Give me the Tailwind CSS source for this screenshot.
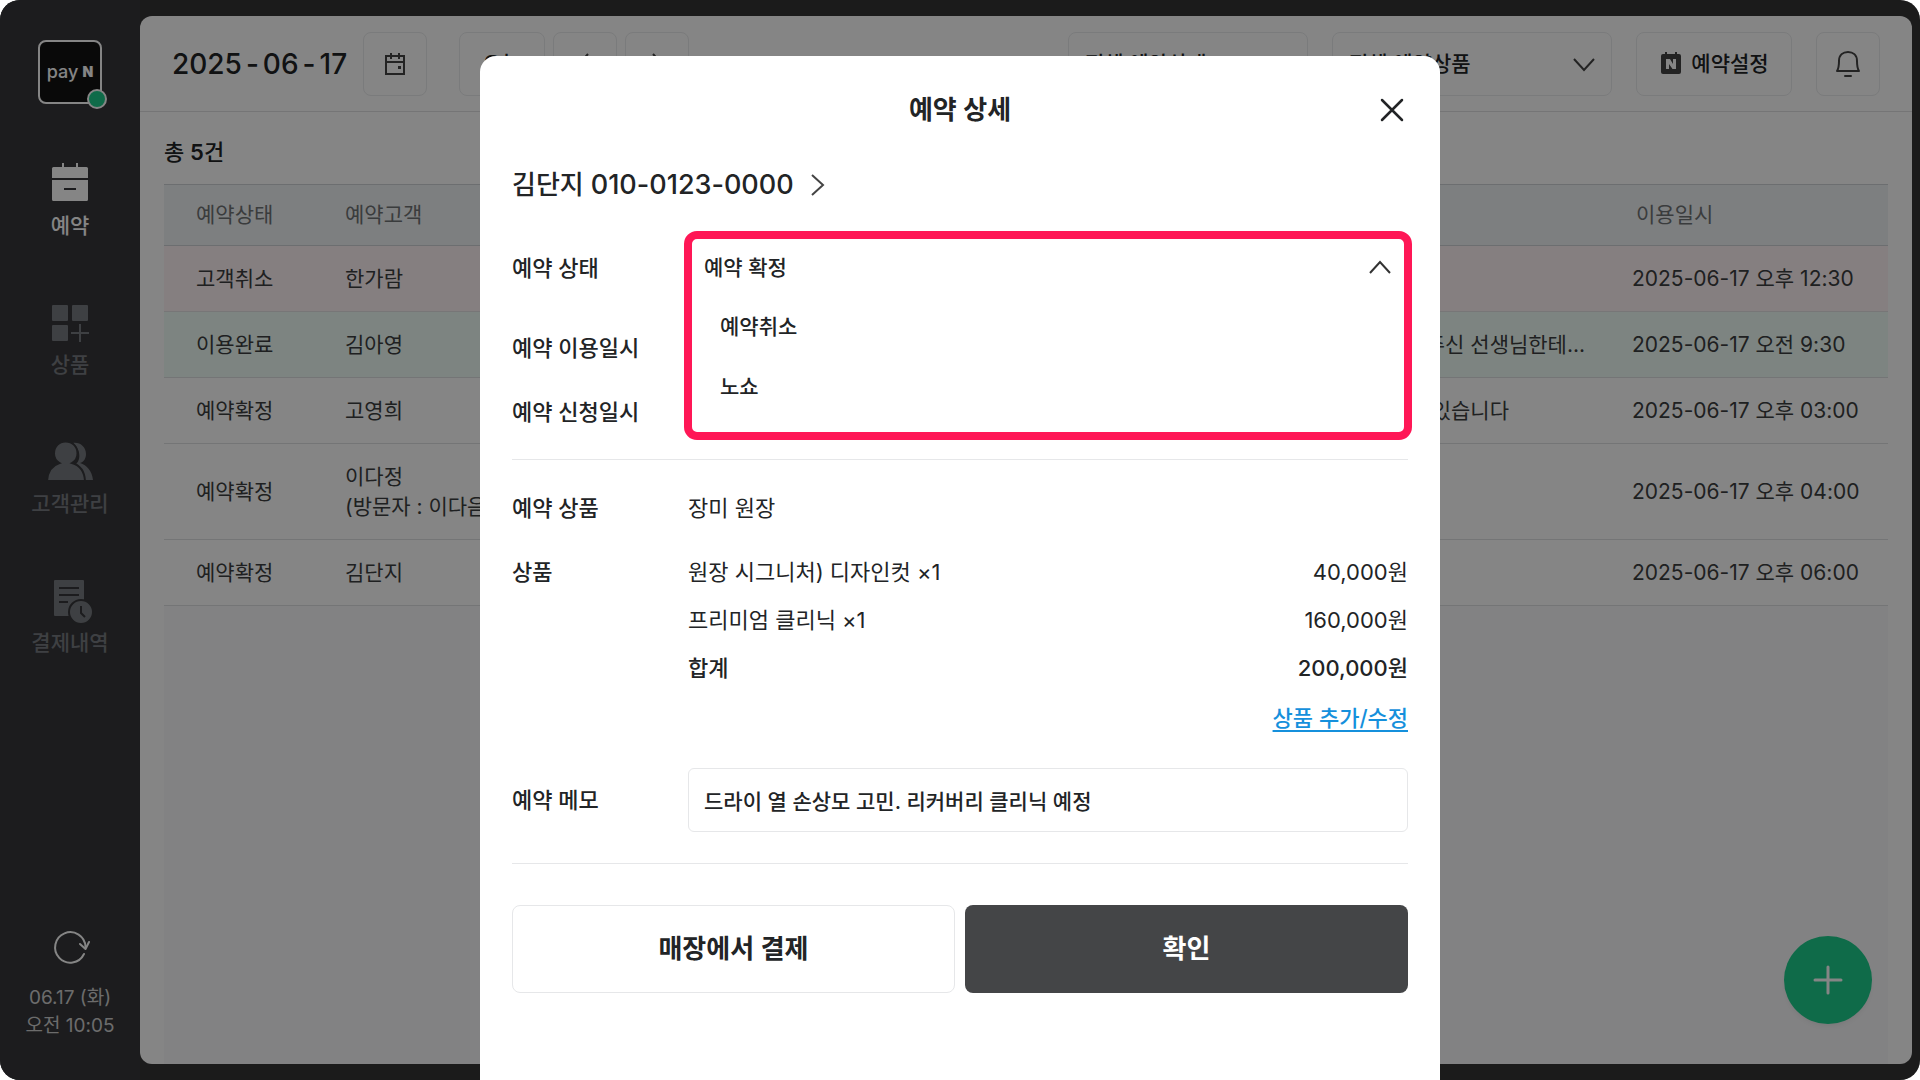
<!DOCTYPE html>
<html lang="ko">
<head>
    <meta charset="UTF-8">
    <meta name="viewport" content="width=device-width, initial-scale=1.0">
    <title>예약 상세</title>
    <script src="https://cdn.jsdelivr.net/npm/@tailwindcss/browser@4"></script>
</head>
<body class="bg-white font-['Inter','Noto_Sans_CJK_KR',sans-serif] text-[#222426]">
    <div class="relative flex h-screen overflow-hidden rounded-[20px] bg-[#343434]">
        <!-- Sidebar -->
        <aside class="flex w-[140px] shrink-0 flex-col items-center bg-[#36373a] pt-10 pb-10 text-[21px] leading-8 text-[#787b80]">
            <div class="relative flex size-16 items-center justify-center gap-1 rounded-lg border-2 border-white bg-[#131313] text-white">
                <span class="text-[18px] leading-5 font-medium">pay</span>
                <span class="text-[14px] leading-5 font-black">N</span>
                <span class="absolute -right-[7px] -bottom-[7px] size-5 rounded-full border-2 border-white bg-[#1dce8c]"></span>
            </div>
            <nav class="mt-14 flex flex-col items-center gap-[57px]">
                <a href="#" class="flex flex-col items-center gap-[2px] text-white">
                    <svg class="h-12 w-12" viewBox="0 0 48 48" fill="currentColor">
                        <path d="M16 3h2v5h-2zM30 3h2v5h-2z"/>
                        <path d="M7.500 7h33a1.500 1.500 0 0 1 1.500 1.500V18H6V8.500A1.500 1.500 0 0 1 7.500 7z"/>
                        <path fill-rule="evenodd" d="M6 20h36v19.500a1.500 1.500 0 0 1-1.500 1.500h-33A1.500 1.500 0 0 1 6 39.500zM18 28v2h12v-2z"/>
                    </svg>
                    <span class="font-medium">예약</span>
                </a>
                <a href="#" class="flex flex-col items-center gap-[2px]">
                    <svg class="h-12 w-12" viewBox="0 0 48 48" fill="currentColor">
                        <rect x="6" y="6" width="16" height="16" rx="1"/>
                        <rect x="26" y="6" width="16" height="16" rx="1"/>
                        <rect x="6" y="26" width="16" height="16" rx="1"/>
                        <path d="M33 25h2v8h8v2h-8v8h-2v-8h-8v-2h8z"/>
                    </svg>
                    <span class="font-medium">상품</span>
                </a>
                <a href="#" class="flex flex-col items-center gap-[2px]">
                    <svg class="h-12 w-12" viewBox="0 0 48 48" fill="currentColor">
                        <path d="M27 5c7-1 13 4 13 11 0 4-2 8-6 9 7 2 12 8 13 17h-8c-1-7-4-13-9-16 4-3 6-13-3-21z"/>
                        <path stroke="#36373a" stroke-width="2" d="M19.500 3.500c7 0 12 5 12 12 0 4-2 7.500-5.500 9.500 7 2 12.500 8 13 18H1c.5-10 6-16 12.500-18C10 23 8 19.500 8 15.500c0-7 5-12 11.500-12z"/>
                    </svg>
                    <span class="font-medium">고객관리</span>
                </a>
                <a href="#" class="flex flex-col items-center gap-[2px]">
                    <svg class="h-12 w-12" viewBox="0 0 48 48" fill="currentColor">
                        <path d="M9 3h28a1 1 0 0 1 1 1v35H9a1 1 0 0 1-1-1V4a1 1 0 0 1 1-1z"/>
                        <path stroke="#36373a" stroke-width="2" d="M13 11h20M13 18h20M13 25h9"/>
                        <circle cx="35" cy="35" r="12" stroke="#36373a" stroke-width="2"/>
                        <path fill="none" stroke="#36373a" stroke-width="2" d="M35 29v7l4 4"/>
                    </svg>
                    <span class="font-medium">결제내역</span>
                </a>
            </nav>
            <button type="button" aria-label="새로고침" class="mt-auto">
                <svg class="size-10" viewBox="0 0 40 40" fill="none" stroke="#fff" stroke-width="2" stroke-linecap="round" stroke-linejoin="round">
                    <path d="M34 26A15.200 15.200 0 1 1 35.500 19"/>
                    <path d="M30 16l5.500 5L39 14"/>
                </svg>
            </button>
            <p class="mt-4 text-center text-[19px] leading-7 text-[#cfcfcf]">06.17 (화)<br>오전 10:05</p>
        </aside>

        <!-- Reservation list -->
        <main class="relative my-4 mr-2 flex flex-1 flex-col overflow-hidden rounded-xl bg-white">
            <header class="flex h-24 shrink-0 items-center border-b border-[#e0e1e3] px-8 text-[21px] leading-8 font-medium">
                <h1 class="flex gap-1 text-[28px] leading-10 font-medium"><span>2025</span><span>-</span><span>06</span><span>-</span><span>17</span></h1>
                <button type="button" aria-label="날짜 선택" class="ml-4 flex size-16 items-center justify-center rounded-lg border border-[#eaebed] text-[#444]">
                    <svg class="size-6" viewBox="0 0 24 24" fill="none" stroke="currentColor" stroke-width="2">
                        <path d="M3 4h18v18H3zM3 10h18M8 1v6M16 1v6"/>
                        <path fill="currentColor" stroke="none" d="M15 14h3v3h-3z"/>
                    </svg>
                </button>
                <button type="button" class="ml-8 h-16 w-[86px] rounded-lg border border-[#eaebed]">오늘</button>
                <button type="button" aria-label="이전" class="ml-2 flex size-16 items-center justify-center rounded-lg border border-[#eaebed] text-[#444]">
                    <svg class="size-6" viewBox="0 0 24 24" fill="none" stroke="currentColor" stroke-width="2"><path d="M15 2l-9 10 9 10"/></svg>
                </button>
                <button type="button" aria-label="다음" class="ml-2 flex size-16 items-center justify-center rounded-lg border border-[#eaebed] text-[#444]">
                    <svg class="size-6" viewBox="0 0 24 24" fill="none" stroke="currentColor" stroke-width="2"><path d="M8 2l9 10-9 10"/></svg>
                </button>
                <select aria-label="예약상태" class="ml-auto h-16 w-60 appearance-none rounded-lg border border-[#eaebed] px-4">
                    <option>전체 예약상태</option>
                </select>
                <div class="relative ml-6">
                    <select aria-label="예약상품" class="h-16 w-[280px] appearance-none rounded-lg border border-[#eaebed] px-4">
                        <option>전체 예약상품</option>
                    </select>
                    <svg class="pointer-events-none absolute top-5 right-4 size-6" viewBox="0 0 24 24" fill="none" stroke="#444" stroke-width="2"><path d="M2 7l10 11L22 7"/></svg>
                </div>
                <button type="button" class="ml-6 flex h-16 w-[156px] items-center justify-center gap-2 rounded-lg border border-[#eaebed]">
                    <svg class="size-6" viewBox="0 0 24 24" fill="#444">
                        <path d="M6 0h2v3H6zM16 0h2v3h-2z"/>
                        <rect x="2" y="2" width="20" height="20" rx="2"/>
                        <path fill="#fff" d="M7 7h4l3 5V7h3v10h-3.500L10 12v5H7z"/>
                    </svg>
                    예약설정
                </button>
                <button type="button" aria-label="알림" class="ml-6 flex size-16 items-center justify-center rounded-lg border border-[#eaebed] text-[#444]">
                    <svg class="size-8" viewBox="0 0 32 32" fill="none" stroke="currentColor" stroke-width="2" stroke-linejoin="round">
                        <path d="M5 23c2-3 2-6 2-10 0-6 4-9 9-9s9 3 9 9c0 4 0 7 2 10z"/>
                        <path stroke-linecap="round" d="M13 28h6"/>
                    </svg>
                </button>
            </header>

            <section class="flex flex-1 flex-col px-6 text-[21px] leading-8">
                <p class="pt-6 pb-4 text-[22px] font-medium">총 <b class="font-semibold">5</b>건</p>
                <table class="w-full table-fixed border-collapse text-left whitespace-nowrap text-[#3c3e40]">
                    <colgroup>
                        <col class="w-[149px]">
                        <col class="w-[280px]">
                        <col>
                        <col class="w-[276px]">
                        <col class="w-[288px]">
                    </colgroup>
                    <thead>
                        <tr class="h-[61px] border-y border-[#d0d3d6] bg-[#f0f3f5] text-[#707376]">
                            <th class="px-8 font-normal">예약상태</th>
                            <th class="px-8 font-normal">예약고객</th>
                            <th class="px-8 font-normal">예약상품</th>
                            <th class="px-8 font-normal">메모</th>
                            <th class="px-9 font-normal">이용일시</th>
                        </tr>
                    </thead>
                    <tbody>
                        <tr class="h-[66px] border-b border-[#e4e2e4] bg-[#fff3f5]">
                            <td class="px-8">고객취소</td>
                            <td class="px-8">한가람</td>
                            <td></td>
                            <td></td>
                            <td class="px-8">2025-06-17 오후 12:30</td>
                        </tr>
                        <tr class="h-[66px] border-b border-[#dfe1e2] bg-[#effdf7]">
                            <td class="px-8">이용완료</td>
                            <td class="px-8">김아영</td>
                            <td></td>
                            <td class="pl-8">소개 해 주신 선생님한테...</td>
                            <td class="px-8">2025-06-17 오전 9:30</td>
                        </tr>
                        <tr class="h-[66px] border-b border-[#dfe1e2]">
                            <td class="px-8">예약확정</td>
                            <td class="px-8">고영희</td>
                            <td></td>
                            <td class="pl-8">못 올 수 있습니다</td>
                            <td class="px-8">2025-06-17 오후 03:00</td>
                        </tr>
                        <tr class="h-24 border-b border-[#dfe1e2]">
                            <td class="px-8">예약확정</td>
                            <td class="px-8 leading-[30px]">이다정<br>(방문자 : 이다음)</td>
                            <td></td>
                            <td></td>
                            <td class="px-8">2025-06-17 오후 04:00</td>
                        </tr>
                        <tr class="h-[66px] border-b border-[#dfe1e2]">
                            <td class="px-8">예약확정</td>
                            <td class="px-8">김단지</td>
                            <td></td>
                            <td></td>
                            <td class="px-8">2025-06-17 오후 06:00</td>
                        </tr>
                    </tbody>
                </table>
                <div class="flex-1 bg-[#fafafc]"></div>
            </section>

            <button type="button" aria-label="예약 추가" class="absolute right-10 bottom-10 flex size-[88px] items-center justify-center rounded-full bg-[#1dce8c] shadow-md shadow-black/5">
                <svg class="size-8" viewBox="0 0 32 32" fill="none" stroke="#fff" stroke-width="3" stroke-linecap="round"><path d="M16 3v26M3 16h26"/></svg>
            </button>
        </main>

        <!-- Reservation detail modal -->
        <div class="absolute inset-0 flex justify-center bg-black/48 pt-14">
            <div role="dialog" aria-labelledby="dialog-title" class="w-full max-w-[960px] rounded-t-2xl bg-white px-8 text-[22px] leading-8">
                <div class="relative flex h-[108px] items-center justify-center">
                    <h2 id="dialog-title" class="text-[26px] leading-10 font-semibold">예약 상세</h2>
                    <button type="button" aria-label="닫기" class="absolute right-0">
                        <svg class="size-8" viewBox="0 0 32 32" fill="none" stroke="currentColor" stroke-width="2.500" stroke-linecap="round"><path d="M6 6l20 20M26 6L6 26"/></svg>
                    </button>
                </div>
                <a href="#" class="flex h-[42px] items-center gap-3 text-[26px] leading-10 font-medium">
                    <span>김단지 <span class="text-[27px]">010-0123-0000</span></span>
                    <svg class="size-6" viewBox="0 0 24 24" fill="none" stroke="#444" stroke-width="2"><path d="M6 2l11 10L6 22"/></svg>
                </a>

                <div class="mt-[30px] grid grid-cols-[176px_1fr] gap-y-8">
                    <label for="status" class="self-center font-medium">예약 상태</label>
                    <div class="relative h-16">
                        <!-- Opened drop-down, lies over the two rows below -->
                        <div class="absolute -inset-x-1 -top-[5px] z-10 h-[209px] rounded-[13px] border-8 border-[#ff1756] bg-white text-[21px] font-medium">
                            <select id="status" class="h-[58px] w-full appearance-none px-3">
                                <option>예약 확정</option>
                            </select>
                            <svg class="pointer-events-none absolute top-4 right-3 size-6" viewBox="0 0 24 24" fill="none" stroke="#333" stroke-width="2"><path d="M2 18L12 7l10 11"/></svg>
                            <ul role="listbox" class="px-7">
                                <li role="option" class="flex h-[60px] items-center">예약취소</li>
                                <li role="option" class="flex h-[60px] items-center">노쇼</li>
                            </ul>
                        </div>
                    </div>
                    <p class="font-medium">예약 이용일시</p>
                    <p></p>
                    <p class="font-medium">예약 신청일시</p>
                    <p></p>
                </div>

                <hr class="mt-[31px] border-[#e6e7e9]">

                <div class="mt-8 grid grid-cols-[176px_1fr]">
                    <p class="font-medium">예약 상품</p>
                    <p>장미 원장</p>
                    <p class="mt-8 font-medium">상품</p>
                    <div class="mt-8 flex flex-col gap-4">
                        <p class="flex justify-between"><span>원장 시그니처) 디자인컷 ×1</span><span>40,000원</span></p>
                        <p class="flex justify-between"><span>프리미엄 클리닉 ×1</span><span>160,000원</span></p>
                        <p class="flex justify-between font-medium"><span>합계</span><span>200,000원</span></p>
                        <a href="#" class="self-end leading-9 font-medium text-[#1590dc] underline decoration-2 underline-offset-4">상품 추가/수정</a>
                    </div>
                    <label for="memo" class="mt-8 self-center font-medium">예약 메모</label>
                    <input id="memo" type="text" value="드라이 열 손상모 고민. 리커버리 클리닉 예정" class="mt-8 h-16 w-full rounded-md border border-[#e6e7e9] px-[15px] text-[21px] font-medium">
                </div>

                <hr class="mt-[31px] border-[#e6e7e9]">

                <div class="mt-[41px] grid grid-cols-2 gap-[10px] text-[26px] leading-10 font-semibold">
                    <button type="button" class="h-[88px] rounded-lg border border-[#e6e7e9]">매장에서 결제</button>
                    <button type="button" class="h-[88px] rounded-lg bg-[#444547] text-white">확인</button>
                </div>
            </div>
        </div>
    </div>
</body>
</html>
